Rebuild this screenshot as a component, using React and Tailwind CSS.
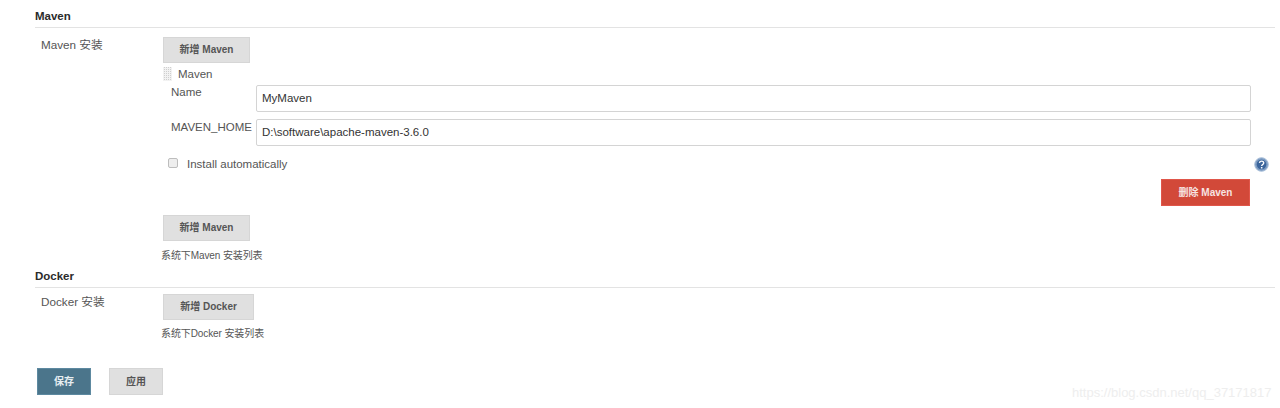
import React from 'react';

const FONT = "font-['Liberation_Sans','Noto_Sans_CJK_SC',sans-serif]";

function GrayButton({ children, className = '' }) {
  return (
    <button
      type="button"
      className={`h-[26px] bg-[#e0e0e0] border border-[#d6d6d6] text-[10px] font-bold text-[#555] pb-[1px] ${className}`}
    >
      {children}
    </button>
  );
}

function SectionHeader({ title }) {
  return (
    <div className="h-[18px] border-b border-[#e3e3e3] text-[11.5px] leading-[12px] font-bold text-[#2b2b2b]">
      {title}
    </div>
  );
}

function HelpIcon() {
  return (
    <svg width="15" height="15" viewBox="0 0 15 15">
      <circle cx="7.5" cy="7.5" r="6.8" fill="#7d9cc2" stroke="#a9bfd9" strokeWidth="1" />
      <circle cx="7.5" cy="7.5" r="4.8" fill="#3b659c" />
      <path d="M5.4 5.8c.3-1.2 1.2-1.7 2.2-1.7 1.2 0 2.1.7 2.1 1.8 0 1.6-2 1.6-2 3.2" fill="none" stroke="#fff" strokeWidth="1.4" />
      <rect x="6.9" y="10" width="1.5" height="1.5" fill="#fff" />
    </svg>
  );
}

function DragHandle() {
  return (
    <div className="w-[9px] h-[14px] bg-[#cfcfcf] bg-[repeating-linear-gradient(0deg,#f2f2f2_0,#f2f2f2_1px,transparent_1px,transparent_2px),repeating-linear-gradient(90deg,#f2f2f2_0,#f2f2f2_1px,transparent_1px,transparent_2px)]" />
  );
}

export default function App() {
  return (
    <div className={`${FONT} relative w-[1280px] h-[408px] overflow-hidden bg-white pl-[35px] pr-[5px] pt-[10px] text-[#555]`}>
      <SectionHeader title="Maven" />

      <div className="flex pt-[9px]">
        <div className="w-[128px] pl-[6px] text-[11.7px] leading-[16px]">Maven 安装</div>
        <div className="flex-1 flex flex-col">
          <GrayButton className="w-[87px]">新增 Maven</GrayButton>

          <div className="flex items-center gap-[6px] h-[14px] mt-[4px] text-[11.5px]">
            <DragHandle />
            <span className="pt-[1px]">Maven</span>
          </div>

          <div className="flex mt-[4px] pl-[8px]">
            <label className="w-[85px] text-[11.5px] leading-[14px]">Name</label>
            <input
              readOnly
              value="MyMaven"
              className="w-[995px] h-[27px] border border-[#d4d4d4] rounded-[2px] px-[5px] pb-[1px] text-[11.5px] text-[#333]"
            />
          </div>
          <div className="flex mt-[7px] pl-[8px]">
            <label className="w-[85px] text-[11.5px] leading-[14px] pt-[1px]">MAVEN_HOME</label>
            <input
              readOnly
              value="D:\software\apache-maven-3.6.0"
              className="w-[995px] h-[27px] border border-[#d4d4d4] rounded-[2px] px-[5px] pb-[2px] text-[11.5px] text-[#333]"
            />
          </div>

          <div className="flex items-center h-[15px] mt-[11px] pl-[5px] pr-[6px]">
            <input type="checkbox" className="appearance-none w-[10px] h-[10px] mr-[9px] -mt-[3px] bg-[#eeeeee] border border-[#bdbdbd] rounded-[2px]" />
            <span className="flex-1 text-[11.5px] pt-[1px]">Install automatically</span>
            <HelpIcon />
          </div>

          <div className="flex justify-end pr-[25px] mt-[7px]">
            <button
              type="button"
              className="w-[89px] h-[27px] bg-[#d24939] border border-[#e0564a] text-[10px] font-bold text-[#f6e4e2]"
            >
              删除 Maven
            </button>
          </div>

          <GrayButton className="w-[87px] mt-[9px]">新增 Maven</GrayButton>
          <div className="-ml-[2px] mt-[9px] text-[10px] tracking-[-0.1px] leading-[12px]">系统下Maven 安装列表</div>
        </div>
      </div>

      <div className="mt-[8px]">
        <SectionHeader title="Docker" />
      </div>

      <div className="flex pt-[6px]">
        <div className="w-[128px] pl-[6px] text-[11.7px] leading-[16px]">Docker 安装</div>
        <div className="flex flex-col items-start">
          <GrayButton className="w-[91px]">新增 Docker</GrayButton>
          <div className="-ml-[2px] mt-[8px] text-[10px] tracking-[-0.1px] leading-[12px]">系统下Docker 安装列表</div>
        </div>
      </div>

      <div className="flex gap-[18px] pl-[2px] mt-[28px]">
        <button
          type="button"
          className="w-[54px] h-[27px] bg-[#4b758b] border border-[#5d89a0] text-[10px] font-bold text-[#e6eef2]"
        >
          保存
        </button>
        <GrayButton className="w-[54px] !h-[27px]">应用</GrayButton>
      </div>

      <div className="absolute left-[1072px] top-[386px] text-[13px] leading-[14px] text-[#eeeeee]">
        https://blog.csdn.net/qq_37171817
      </div>
    </div>
  );
}
